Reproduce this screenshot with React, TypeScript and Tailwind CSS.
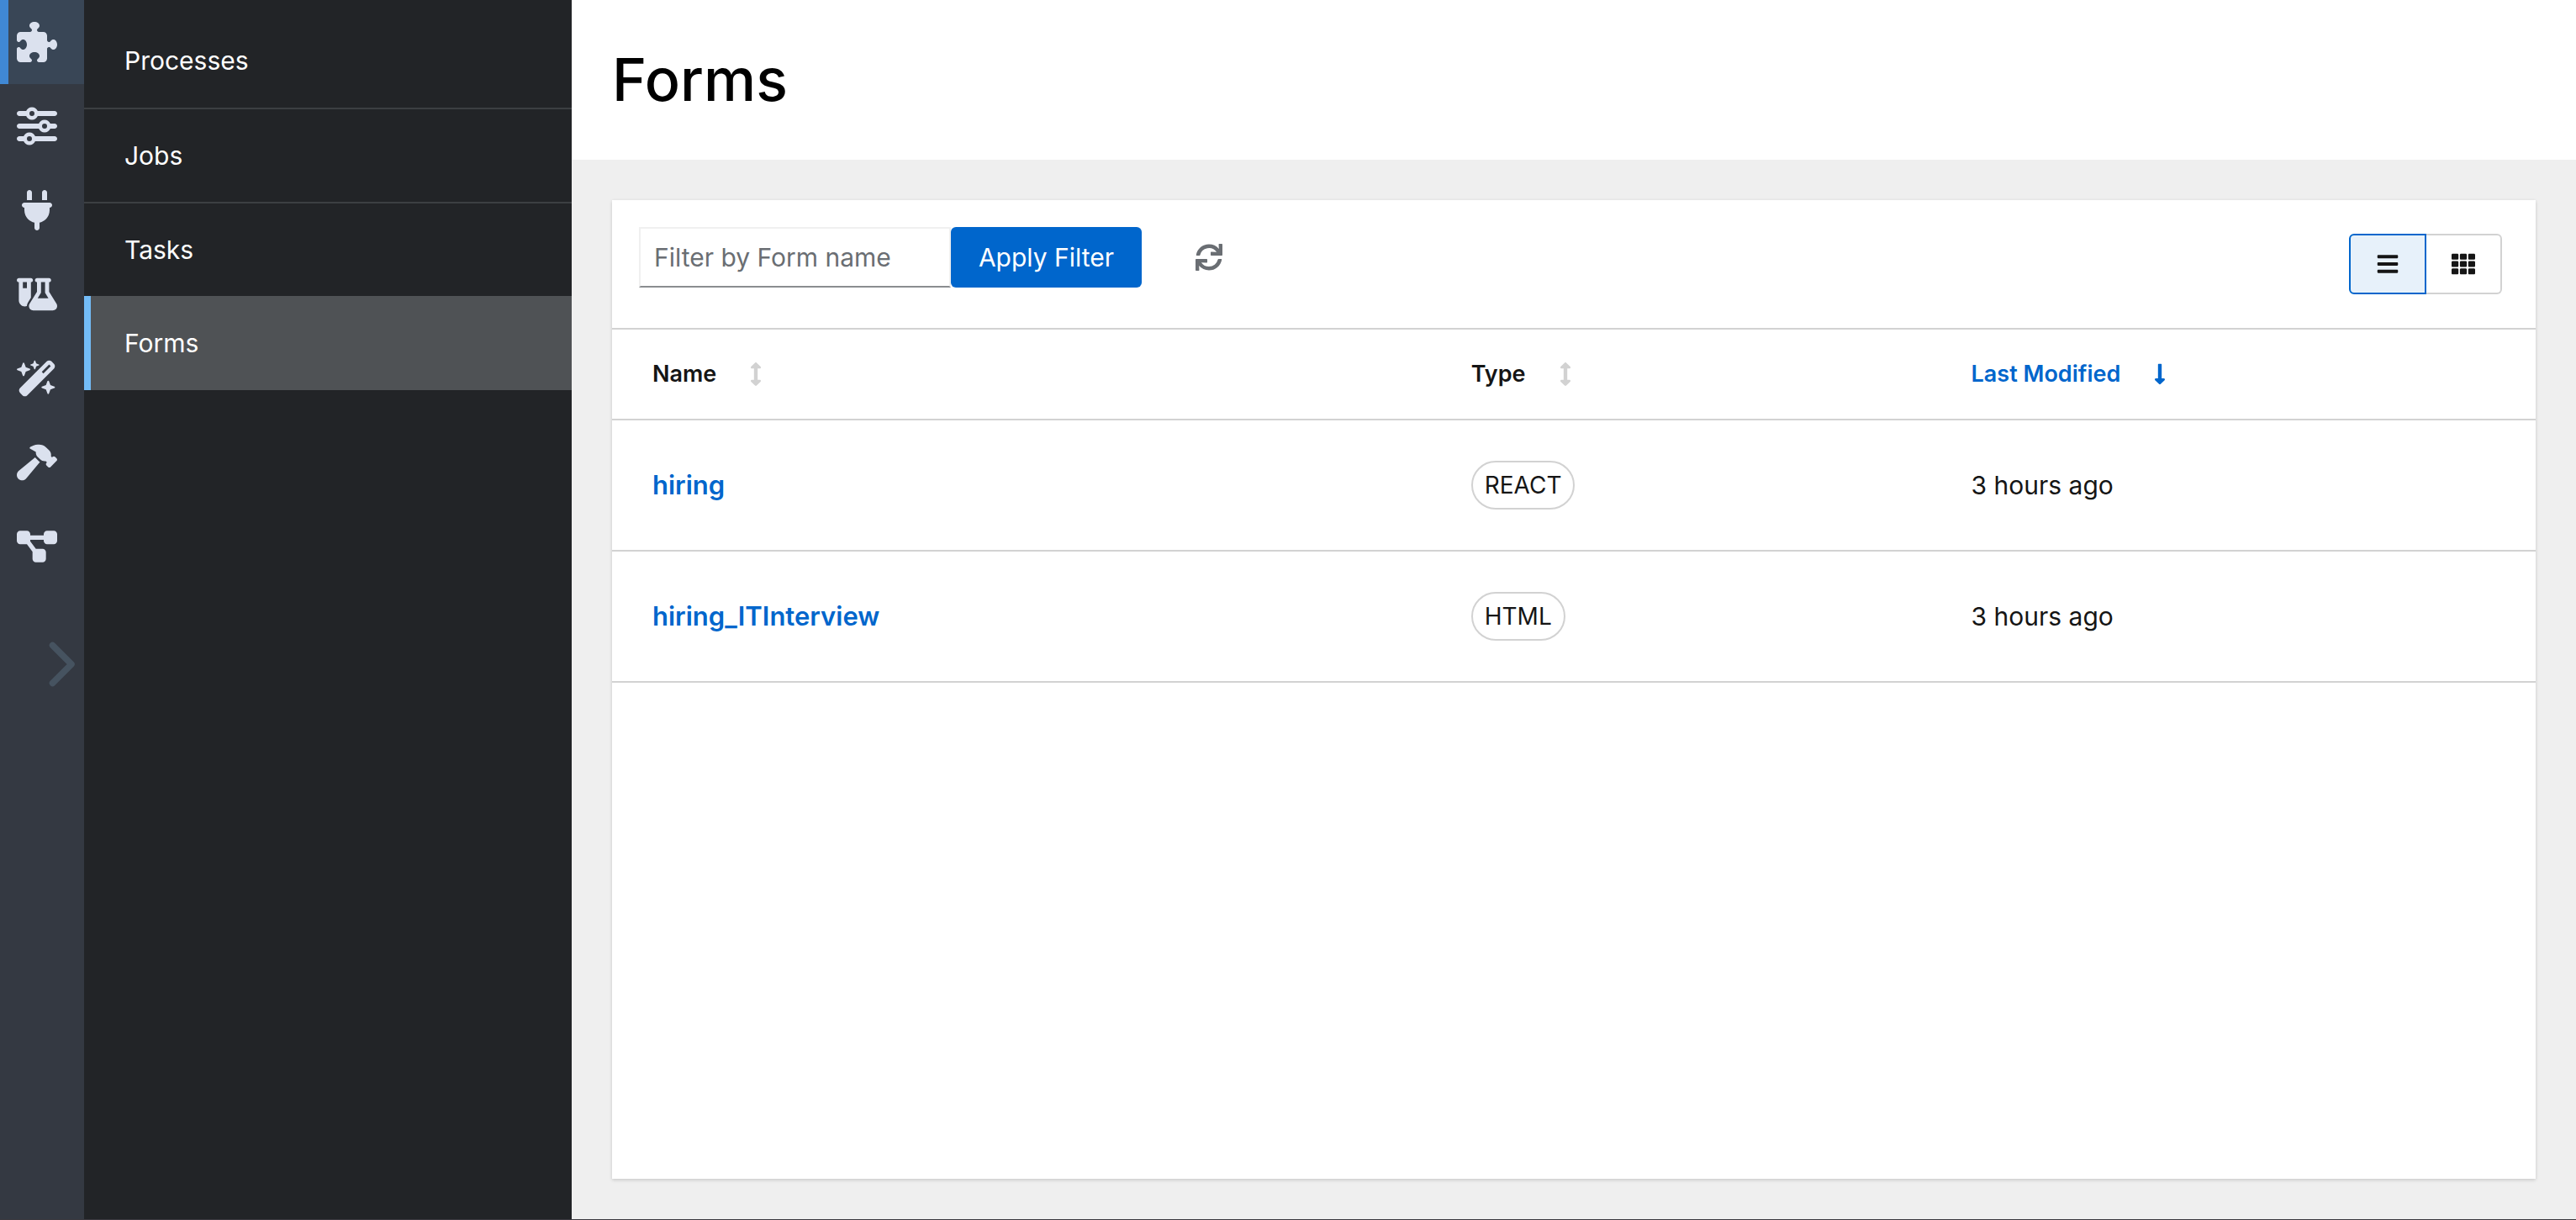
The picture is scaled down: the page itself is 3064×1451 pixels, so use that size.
import type { ReactNode } from 'react';
import {
  FaPuzzlePiece,
  FaSliders,
  FaPlug,
  FaFlaskVial,
  FaWandMagicSparkles,
  FaHammer,
  FaDiagramProject,
} from 'react-icons/fa6';
import { FaSync, FaBars, FaTh, FaArrowsAltV, FaLongArrowAltDown } from 'react-icons/fa';

const tools = [
  { label: 'Extensions', Icon: FaPuzzlePiece },
  { label: 'Configuration', Icon: FaSliders },
  { label: 'Dev Services', Icon: FaPlug },
  { label: 'Continuous Testing', Icon: FaFlaskVial },
  { label: 'Build Steps', Icon: FaWandMagicSparkles },
  { label: 'Build', Icon: FaHammer },
  { label: 'Workflows', Icon: FaDiagramProject },
];

const sections = ['Processes', 'Jobs', 'Tasks', 'Forms'];

const forms = [
  { name: 'hiring', type: 'REACT', modified: '3 hours ago' },
  { name: 'hiring_ITInterview', type: 'HTML', modified: '3 hours ago' },
];

function ToolRail() {
  return (
    <nav aria-label="Tools" className="flex w-[100px] shrink-0 flex-col bg-[#343942]">
      {tools.map(({ label, Icon }, i) => (
        <a
          key={label}
          href="#"
          aria-label={label}
          className={
            i === 0
              ? 'flex h-[100px] items-center border-l-[10px] border-[#4088d4] bg-[#394656] pl-[10px]'
              : 'flex h-[100px] items-center border-l-[10px] border-transparent pl-[10px]'
          }
        >
          <span className="flex w-12 justify-center text-[#dbe1ee]">
            <Icon className="max-h-12 max-w-12 text-[48px]" />
          </span>
        </a>
      ))}
      <button type="button" aria-label="Expand menu" className="mt-[60px] mr-2 self-end">
        <svg viewBox="0 0 36 60" className="block h-[60px] w-9" fill="none" stroke="#465360" strokeWidth="7.5" strokeLinecap="round" strokeLinejoin="round">
          <path d="M6.5 7.5 29 30 6.5 52.5" />
        </svg>
      </button>
    </nav>
  );
}

function Sidebar() {
  return (
    <nav aria-label="Sections" className="w-[580px] shrink-0 bg-[#222427] pt-4">
      <ul>
        {sections.map((s, i) => (
          <li key={s}>
            <a
              href="#"
              aria-current={s === 'Forms' ? 'page' : undefined}
              className={
                s === 'Forms'
                  ? 'flex h-28 items-center border-l-8 border-[#73bcf7] bg-[#4f5255] pl-10 text-[30px] leading-[48px] text-white'
                  : i === 0
                    ? 'flex h-28 items-center pl-12 text-[30px] leading-[48px] text-white'
                    : 'flex h-28 items-center border-t-2 border-[#3c3f42] pl-12 text-[30px] leading-[48px] text-white'
              }
            >
              {s}
            </a>
          </li>
        ))}
      </ul>
    </nav>
  );
}

function SortHeader({ active, children }: { active?: boolean; children: ReactNode }) {
  return (
    <button
      type="button"
      className={
        active
          ? 'flex items-center gap-10 text-[27px] leading-[42px] font-semibold text-[#0066cc]'
          : 'flex items-center gap-10 text-[27px] leading-[42px] font-semibold text-[#151515]'
      }
    >
      {children}
      {active ? (
        <FaLongArrowAltDown className="h-7 w-[14px]" />
      ) : (
        <FaArrowsAltV className="h-7 w-[14px] text-[#d2d2d2]" />
      )}
    </button>
  );
}

function Toolbar() {
  return (
    <div className="flex items-start justify-between py-8 pr-10 pl-8">
      <form className="flex items-center" onSubmit={(e) => e.preventDefault()}>
        <input
          type="text"
          aria-label="Filter by Form name"
          placeholder="Filter by Form name"
          className="h-18 w-[371px] border-2 border-[#f0f0f0] border-b-[#8a8d90] bg-white px-4 text-[30px] leading-[48px] text-[#151515] outline-none placeholder:text-[#6a6e73]"
        />
        <button
          type="submit"
          className="h-18 w-[227px] rounded-md bg-[#0066cc] text-[30px] leading-[48px] whitespace-nowrap text-white"
        >
          Apply Filter
        </button>
        <button type="button" aria-label="Refresh" className="ml-16 text-[#6a6e73]">
          <FaSync className="size-8" />
        </button>
      </form>
      <div role="group" aria-label="View" className="mt-2 mb-2 flex">
        <button
          type="button"
          aria-label="Table view"
          aria-pressed="true"
          className="flex h-18 w-[92px] items-center justify-center rounded-l-md border-2 border-[#0066cc] bg-[#e7f1fa] text-[#151515]"
        >
          <FaBars className="size-7" />
        </button>
        <button
          type="button"
          aria-label="Card view"
          aria-pressed="false"
          className="flex h-18 w-[90px] items-center justify-center rounded-r-md border-2 border-l-0 border-[#d2d2d2] text-[#151515]"
        >
          <FaTh className="size-7" />
        </button>
      </div>
    </div>
  );
}

function FormsTable() {
  return (
    <table className="w-full table-fixed border-collapse text-left">
      <colgroup>
        <col className="w-[44%]" />
        <col className="w-[26%]" />
        <col className="w-[30%]" />
      </colgroup>
      <thead>
        <tr className="h-[108px] border-y-2 border-[#d2d2d2]">
          <th scope="col" className="pl-12">
            <SortHeader>Name</SortHeader>
          </th>
          <th scope="col" className="pl-[15px]">
            <SortHeader>Type</SortHeader>
          </th>
          <th scope="col" className="pl-[15px]" aria-sort="descending">
            <SortHeader active>Last Modified</SortHeader>
          </th>
        </tr>
      </thead>
      <tbody>
        {forms.map((f) => (
          <tr key={f.name} className="h-[156px] border-b-2 border-[#d2d2d2]">
            <td className="pl-12 text-[31px] leading-[48px]">
              <a href="#" className="font-semibold text-[#0066cc]">
                {f.name}
              </a>
            </td>
            <td className="pl-[15px]">
              <span className="inline-block rounded-full border-2 border-[#d2d2d2] px-[14px] py-[6px] align-middle text-[28px] leading-[42px] text-[#151515]">
                {f.type}
              </span>
            </td>
            <td className="pl-[15px] text-[30px] leading-[48px] text-[#151515]">{f.modified}</td>
          </tr>
        ))}
      </tbody>
    </table>
  );
}

export default function App() {
  return (
    <div className="flex min-h-screen flex-col bg-[#3a393f] font-['Inter',sans-serif]">
      <div className="flex grow">
        <ToolRail />
        <Sidebar />
        <main className="flex min-w-0 grow flex-col bg-[#efefef]">
          <header className="bg-white px-12 py-12">
            <h1 className="text-[70px] leading-[94px] font-medium text-black">Forms</h1>
          </header>
          <section className="m-12 grow bg-white shadow-[0_2px_4px_rgba(3,3,3,0.12),0_0_4px_rgba(3,3,3,0.06)]">
            <Toolbar />
            <FormsTable />
          </section>
        </main>
      </div>
      <div className="h-px" />
    </div>
  );
}
